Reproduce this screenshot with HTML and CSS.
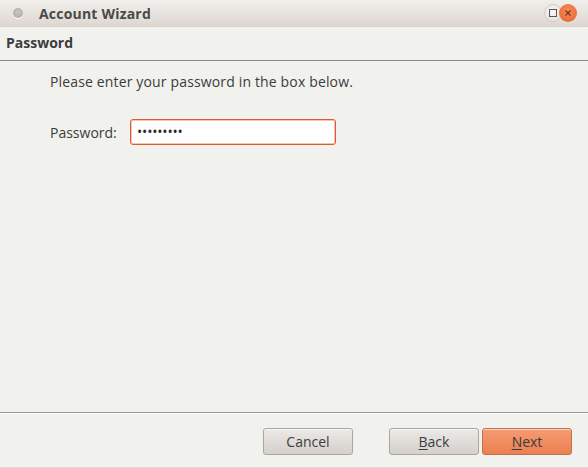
FILE: index.html
```html
<!DOCTYPE html>
<html>
<head>
<meta charset="utf-8">
<link rel="stylesheet" href="styles.css">
</head>
<body>
<div class="window">
  <div class="titlebar">
    <span class="dot"></span>
    <span class="title">Account Wizard</span>
    <span class="spacer"></span>
    <span class="wbtn max"><svg width="10" height="10" viewBox="0 0 10 10"><rect x="1.5" y="1.5" width="7" height="7" fill="none" stroke="#5a5753" stroke-width="1"/></svg></span>
    <span class="wbtn close"><svg width="10" height="10" viewBox="0 0 10 10"><path d="M2.5 2.5L7.5 7.5M7.5 2.5L2.5 7.5" stroke="#6a3520" stroke-width="1.1"/></svg></span>
  </div>
  <div class="header">Password</div>
  <div class="content">
    <p class="intro">Please enter your password in the box below.</p>
    <div class="row">
      <label class="label">Password:</label>
      <div class="input">•••••••••</div>
    </div>
  </div>
  <div class="footer">
    <button class="btn cancel">Cancel</button>
    <button class="btn back"><u>B</u>ack</button>
    <button class="btn next"><u>N</u>ext</button>
  </div>
</div>
</body>
</html>
```
FILE: styles.css
```css
html, body {
  margin: 0;
  padding: 0;
}
body {
  width: 588px;
  height: 468px;
  overflow: hidden;
  background: #f1f1ee;
  font-family: "Open Sans", "DejaVu Sans", sans-serif;
  color: #3c3c3c;
}
.window {
  display: flex;
  flex-direction: column;
  height: 468px;
  background: #f1f1ee;
  border-bottom: 1px solid #dad9d5;
  box-sizing: border-box;
}
.titlebar {
  height: 27px;
  display: flex;
  align-items: center;
  background: linear-gradient(#f1efec, #ded7d0);
  border-bottom: 1px solid #d8d1ca;
  box-sizing: border-box;
  padding: 0 11px 0 13px;
}
.dot {
  width: 10px;
  height: 10px;
  flex-shrink: 0;
  border-radius: 50%;
  background: radial-gradient(circle at 50% 40%, #c9c6c2, #a9a6a2);
  box-shadow: 0 1px 0 #fff;
}
.title {
  margin-left: 16px;
  font-weight: bold;
  font-size: 14px;
  letter-spacing: 0.2px;
  color: #4b4a47;
}
.spacer { flex: 1; }
.wbtn {
  width: 18px;
  height: 18px;
  flex-shrink: 0;
  border-radius: 50%;
  display: flex;
  align-items: center;
  justify-content: center;
  margin-top: -1px;
}
.max {
  background: radial-gradient(circle at 50% 40%, #fbfaf9, #dedad6);
  border: 1px solid #d2cdc7;
  box-sizing: border-box;
}
.close {
  margin-left: -3px;
  background: radial-gradient(circle at 50% 40%, #f68c5c, #e5602e);
}
.header {
  height: 33px;
  line-height: 31px;
  padding-left: 6px;
  font-size: 14px;
  font-weight: bold;
  color: #3c3c3c;
  border-bottom: 1px solid #8c8782;
}
.content {
  flex: 1;
  padding: 12px 0 0 50px;
  font-size: 14px;
}
.intro {
  margin: 0;
  line-height: 18px;
  letter-spacing: 0.15px;
}
.row {
  display: flex;
  align-items: center;
  margin-top: 28px;
}
.label {
  width: 80px;
}
.input {
  width: 206px;
  height: 26px;
  box-sizing: border-box;
  border: 1px solid #e05c2c;
  border-radius: 3px;
  background: #fff;
  padding-left: 6px;
  font-size: 14px;
  line-height: 24px;
  letter-spacing: -0.2px;
  color: #2a2a2a;
  box-shadow: inset 0 0 0 1px #f6c4b2;
}
.footer {
  height: 55px;
  border-top: 1px solid #9d9892;
  box-shadow: inset 0 1px 0 #ffffff;
  display: flex;
  align-items: center;
  padding: 2px 0 0 263px;
  box-sizing: border-box;
}
.btn {
  width: 90px;
  height: 27px;
  border: 1px solid #a9a59f;
  border-radius: 3px;
  background: linear-gradient(#ece9e6, #d4d0cc);
  font-family: inherit;
  font-size: 14px;
  color: #3c3c3c;
  padding: 0;
  box-shadow: inset 0 1px 0 rgba(255,255,255,0.6);
}
.btn u { text-decoration-thickness: 1px; text-underline-offset: 2px; }
.back { margin-left: 36px; }
.next {
  margin-left: 3px;
  background: linear-gradient(#f59b72, #ec8050);
  border-color: #c0704e;
}
```
